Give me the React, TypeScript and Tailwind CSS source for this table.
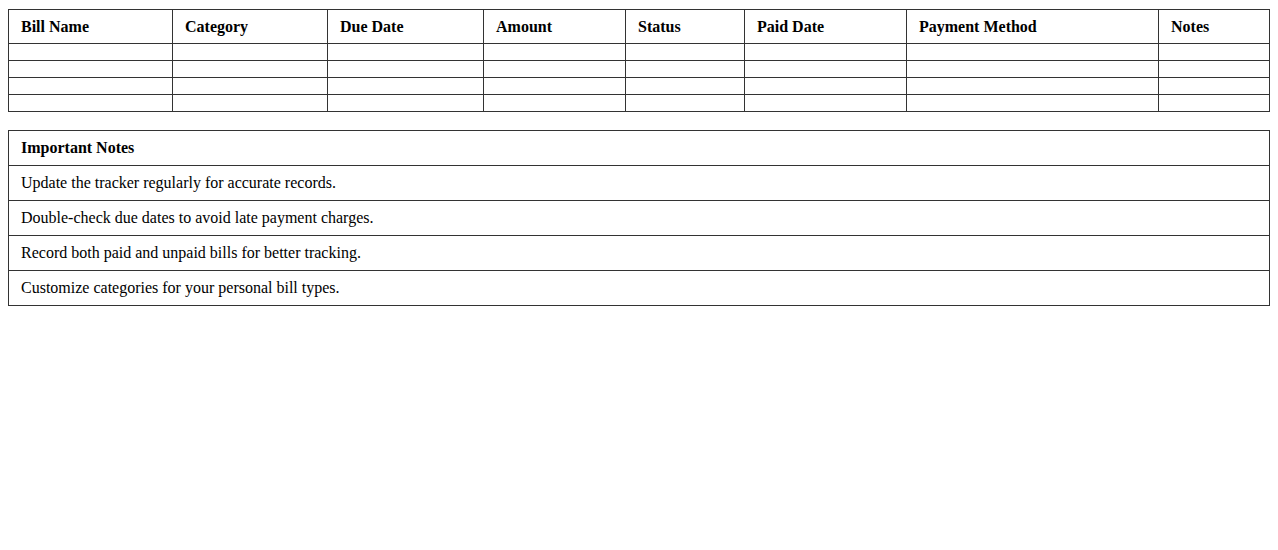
import React from "react";

const columns = [
  { label: "Bill Name", width: "w-[164px]" },
  { label: "Category", width: "w-[155px]" },
  { label: "Due Date", width: "w-[156px]" },
  { label: "Amount", width: "w-[142px]" },
  { label: "Status", width: "w-[119px]" },
  { label: "Paid Date", width: "w-[162px]" },
  { label: "Payment Method", width: "w-[252px]" },
  { label: "Notes", width: "w-[111px]" },
];

const notes = [
  "Update the tracker regularly for accurate records.",
  "Double-check due dates to avoid late payment charges.",
  "Record both paid and unpaid bills for better tracking.",
  "Customize categories for your personal bill types.",
];

export default function App() {
  return (
    <div className="min-h-[550px] bg-white px-[8px] pt-[9px] text-[16px] leading-[18px] text-black [font-family:'Liberation_Serif','Times_New_Roman',serif]">
      {/* Bill tracker table */}
      <table className="w-[1262px] table-fixed border-collapse">
        <colgroup>
          {columns.map((c) => (
            <col key={c.label} className={c.width} />
          ))}
        </colgroup>
        <thead>
          <tr className="h-[34px]">
            {columns.map((c) => (
              <th
                key={c.label}
                className="border border-[#333] px-[12px] py-0 text-left font-bold"
              >
                {c.label}
              </th>
            ))}
          </tr>
        </thead>
        <tbody>
          {[0, 1, 2, 3].map((r) => (
            <tr key={r} className="h-[17px]">
              {columns.map((c) => (
                <td key={c.label} className="border border-[#333] p-0"></td>
              ))}
            </tr>
          ))}
        </tbody>
      </table>

      {/* Important notes */}
      <table className="mt-[18px] w-[1262px] border-collapse">
        <thead>
          <tr className="h-[35px]">
            <th className="border border-[#333] px-[12px] py-0 text-left font-bold">
              Important Notes
            </th>
          </tr>
        </thead>
        <tbody>
          {notes.map((n) => (
            <tr key={n} className="h-[35px]">
              <td className="border border-[#333] px-[12px] py-0">{n}</td>
            </tr>
          ))}
        </tbody>
      </table>
    </div>
  );
}
